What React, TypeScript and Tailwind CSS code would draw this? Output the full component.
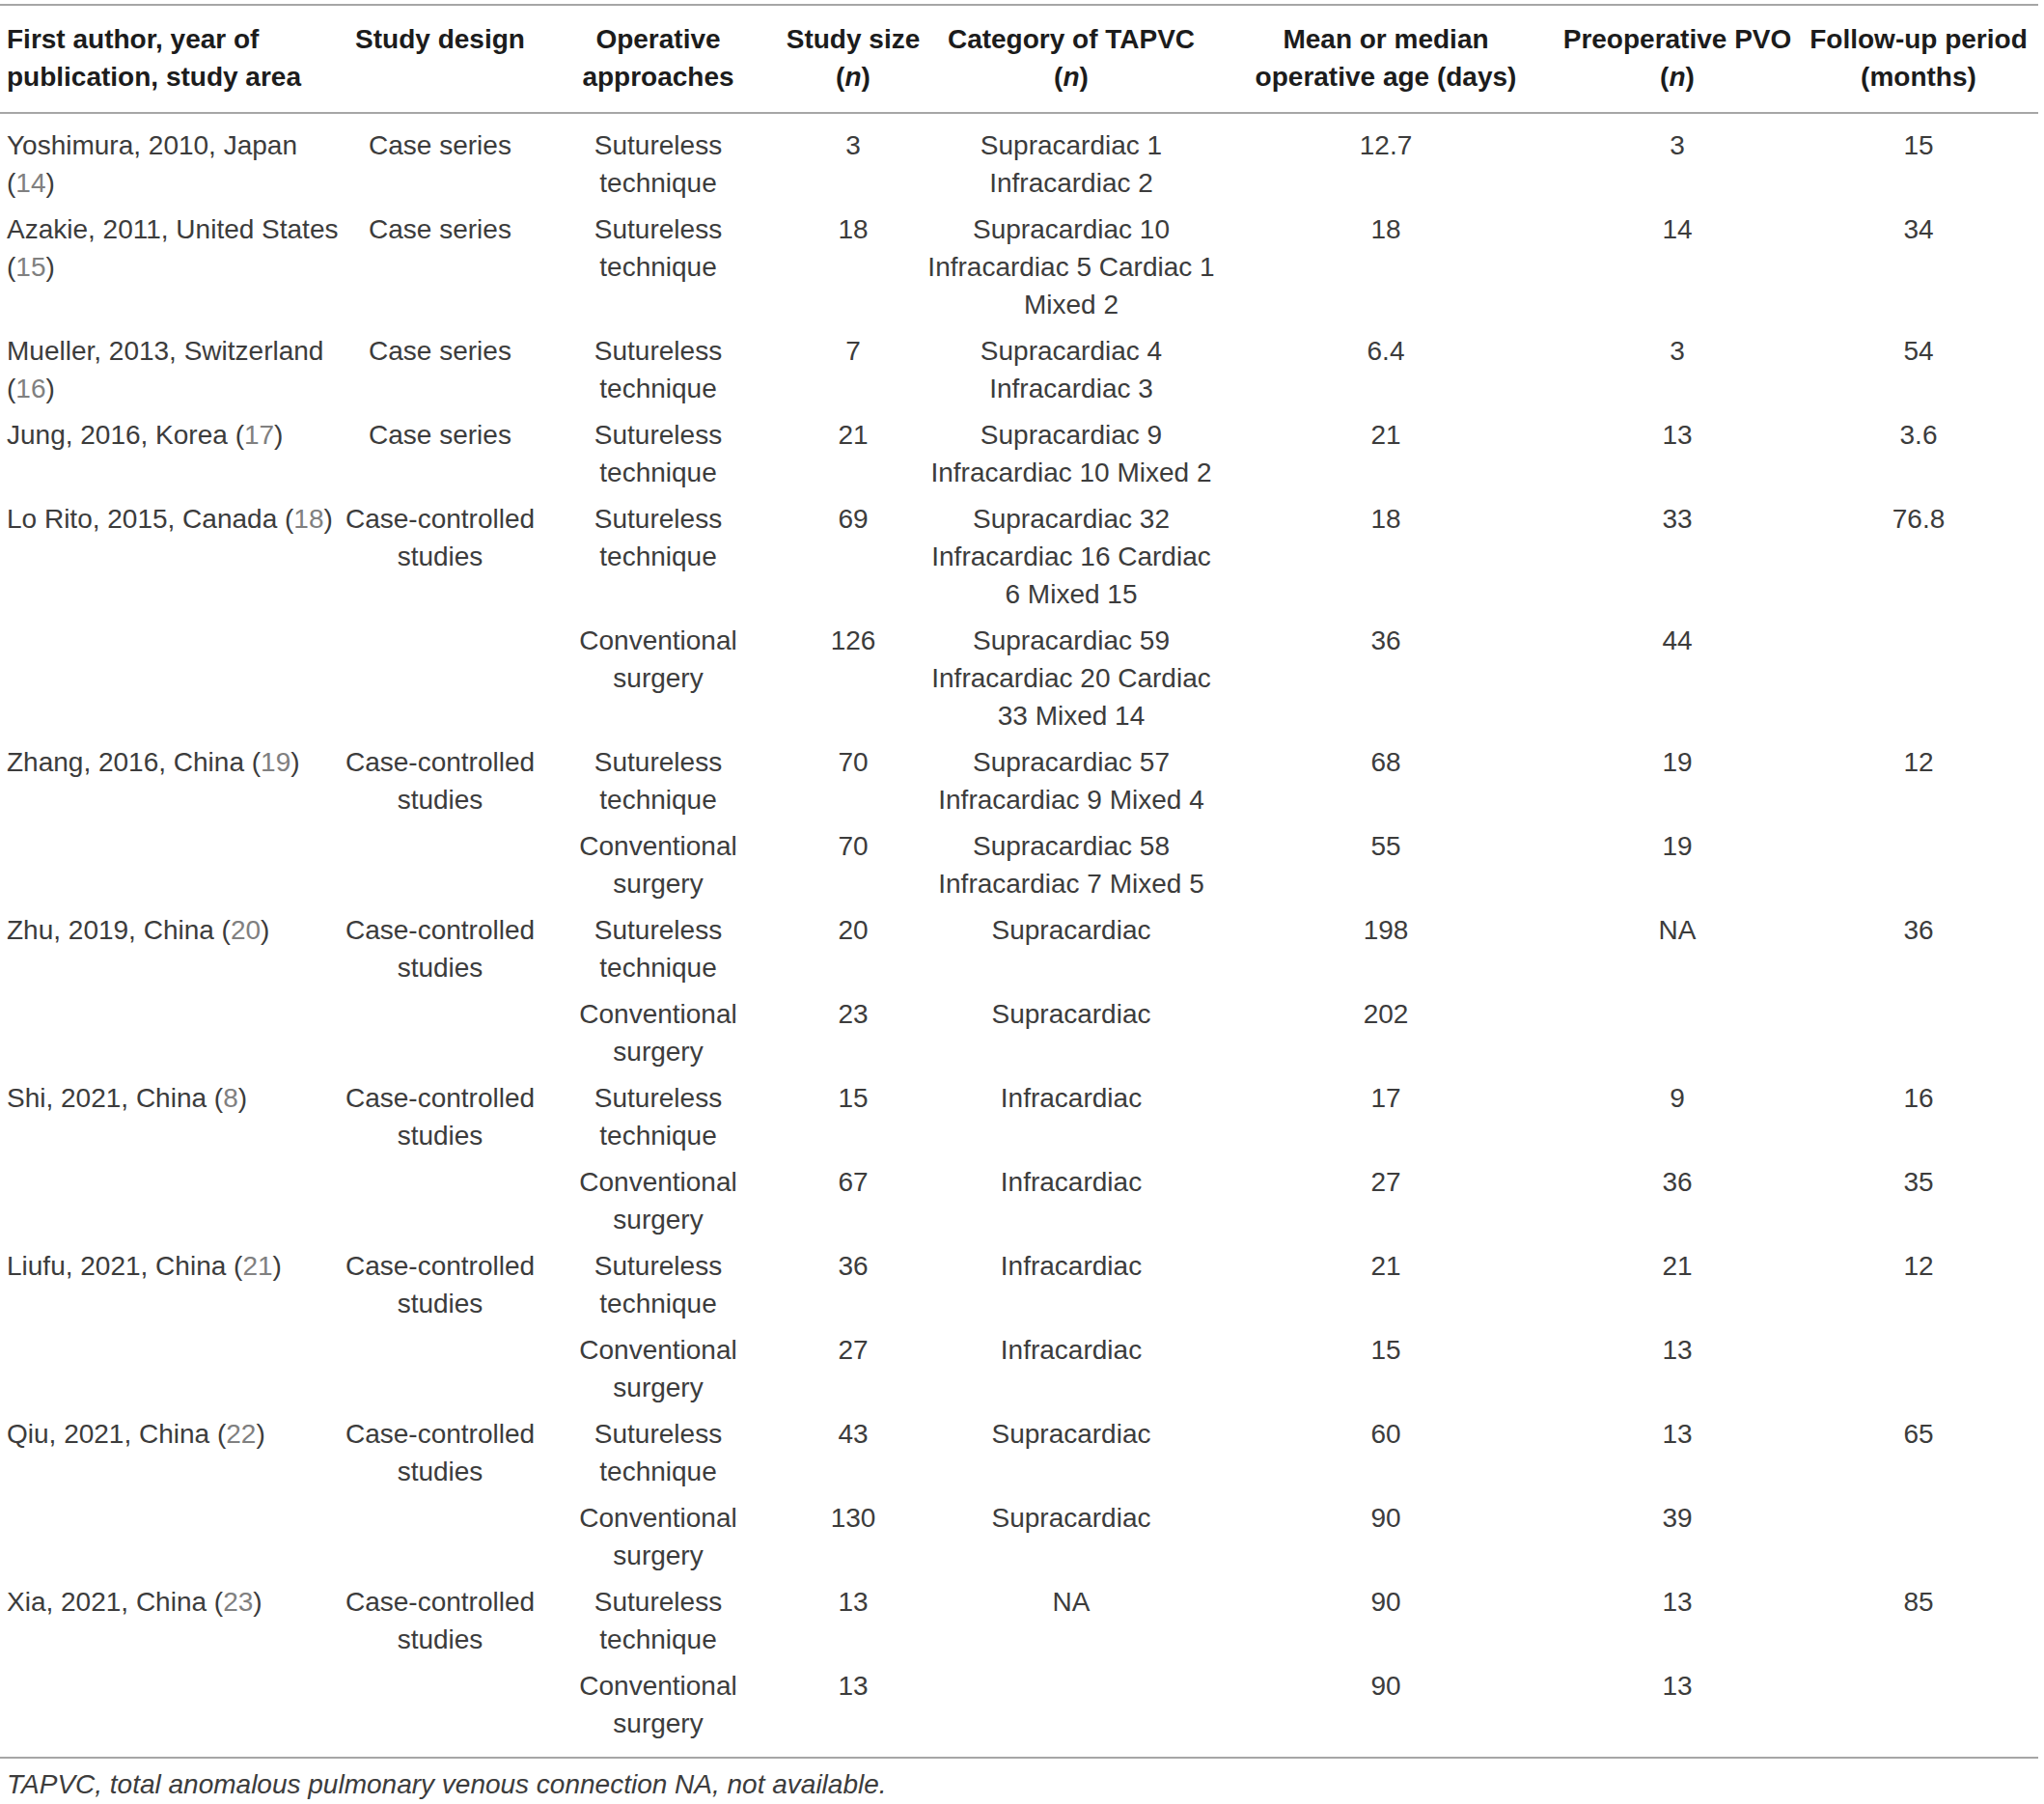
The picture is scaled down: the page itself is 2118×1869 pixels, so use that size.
import { type ReactNode } from 'react';

type Row = {
    author?: ReactNode[];
    design?: string[];
    approach: string[];
    size: string;
    category: string[];
    age: string;
    pvo: string;
    follow: string;
};

const cite = (n: string) => (
    <>
        (<span className="text-[#808080]">{n}</span>)
    </>
);

const sut = ['Sutureless', 'technique'];
const conv = ['Conventional', 'surgery'];
const cc = ['Case-controlled', 'studies'];
const cs = ['Case series'];

const rows: Row[] = [
    { author: ['Yoshimura, 2010, Japan', cite('14')], design: cs, approach: sut, size: '3', category: ['Supracardiac 1', 'Infracardiac 2'], age: '12.7', pvo: '3', follow: '15' },
    { author: ['Azakie, 2011, United States', cite('15')], design: cs, approach: sut, size: '18', category: ['Supracardiac 10', 'Infracardiac 5 Cardiac 1', 'Mixed 2'], age: '18', pvo: '14', follow: '34' },
    { author: ['Mueller, 2013, Switzerland', cite('16')], design: cs, approach: sut, size: '7', category: ['Supracardiac 4', 'Infracardiac 3'], age: '6.4', pvo: '3', follow: '54' },
    { author: [<>Jung, 2016, Korea {cite('17')}</>], design: cs, approach: sut, size: '21', category: ['Supracardiac 9', 'Infracardiac 10 Mixed 2'], age: '21', pvo: '13', follow: '3.6' },
    { author: [<>Lo Rito, 2015, Canada {cite('18')}</>], design: cc, approach: sut, size: '69', category: ['Supracardiac 32', 'Infracardiac 16 Cardiac', '6 Mixed 15'], age: '18', pvo: '33', follow: '76.8' },
    { approach: conv, size: '126', category: ['Supracardiac 59', 'Infracardiac 20 Cardiac', '33 Mixed 14'], age: '36', pvo: '44', follow: '' },
    { author: [<>Zhang, 2016, China {cite('19')}</>], design: cc, approach: sut, size: '70', category: ['Supracardiac 57', 'Infracardiac 9 Mixed 4'], age: '68', pvo: '19', follow: '12' },
    { approach: conv, size: '70', category: ['Supracardiac 58', 'Infracardiac 7 Mixed 5'], age: '55', pvo: '19', follow: '' },
    { author: [<>Zhu, 2019, China {cite('20')}</>], design: cc, approach: sut, size: '20', category: ['Supracardiac'], age: '198', pvo: 'NA', follow: '36' },
    { approach: conv, size: '23', category: ['Supracardiac'], age: '202', pvo: '', follow: '' },
    { author: [<>Shi, 2021, China {cite('8')}</>], design: cc, approach: sut, size: '15', category: ['Infracardiac'], age: '17', pvo: '9', follow: '16' },
    { approach: conv, size: '67', category: ['Infracardiac'], age: '27', pvo: '36', follow: '35' },
    { author: [<>Liufu, 2021, China {cite('21')}</>], design: cc, approach: sut, size: '36', category: ['Infracardiac'], age: '21', pvo: '21', follow: '12' },
    { approach: conv, size: '27', category: ['Infracardiac'], age: '15', pvo: '13', follow: '' },
    { author: [<>Qiu, 2021, China {cite('22')}</>], design: cc, approach: sut, size: '43', category: ['Supracardiac'], age: '60', pvo: '13', follow: '65' },
    { approach: conv, size: '130', category: ['Supracardiac'], age: '90', pvo: '39', follow: '' },
    { author: [<>Xia, 2021, China {cite('23')}</>], design: cc, approach: sut, size: '13', category: ['NA'], age: '90', pvo: '13', follow: '85' },
    { approach: conv, size: '13', category: [], age: '90', pvo: '13', follow: '' },
];

function Lines({ items }: { items?: ReactNode[] }) {
    if (!items) return null;
    return (
        <>
            {items.map((l, k) => (
                <div key={k}>{l}</div>
            ))}
        </>
    );
}

const italicN = <span className="italic">n</span>;

export default function App() {
    const last = rows.length - 1;
    return (
        <div className="bg-white min-h-screen pt-[4px] font-['Liberation_Sans',Arial,sans-serif] text-[28px] leading-[39px] text-[#3c3c3c]">
            <table className="w-[2112px] table-fixed border-collapse border-t-2 border-b-2 border-[#a6a6a6]">
                <colgroup>
                    <col className="w-[356px]" />
                    <col className="w-[200px]" />
                    <col className="w-[252px]" />
                    <col className="w-[152px]" />
                    <col className="w-[300px]" />
                    <col className="w-[352px]" />
                    <col className="w-[252px]" />
                    <col className="w-[248px]" />
                </colgroup>
                <thead>
                    <tr className="font-bold text-[#1c1c1c] align-top whitespace-nowrap">
                        <th className="text-left pl-[7px] pt-[15px] pb-[17px] border-b-2 border-[#a6a6a6] font-bold">
                            <div>First author, year of</div>
                            <div>publication, study area</div>
                        </th>
                        <th className="text-center pt-[15px] pb-[17px] border-b-2 border-[#a6a6a6] font-bold">Study design</th>
                        <th className="text-center pt-[15px] pb-[17px] border-b-2 border-[#a6a6a6] font-bold">
                            <div>Operative</div>
                            <div>approaches</div>
                        </th>
                        <th className="text-center pt-[15px] pb-[17px] border-b-2 border-[#a6a6a6] font-bold">
                            <div>Study size</div>
                            <div>({italicN})</div>
                        </th>
                        <th className="text-center pt-[15px] pb-[17px] border-b-2 border-[#a6a6a6] font-bold">
                            <div>Category of TAPVC</div>
                            <div>({italicN})</div>
                        </th>
                        <th className="text-center pt-[15px] pb-[17px] border-b-2 border-[#a6a6a6] font-bold">
                            <div>Mean or median</div>
                            <div>operative age (days)</div>
                        </th>
                        <th className="text-center pt-[15px] pb-[17px] border-b-2 border-[#a6a6a6] font-bold">
                            <div>Preoperative PVO</div>
                            <div>({italicN})</div>
                        </th>
                        <th className="text-center pt-[15px] pb-[17px] border-b-2 border-[#a6a6a6] font-bold">
                            <div>Follow-up period</div>
                            <div>(months)</div>
                        </th>
                    </tr>
                </thead>
                <tbody>
                    {rows.map((r, i) => {
                        const pad = `${i === 0 ? 'pt-[13px]' : 'pt-[5px]'} ${i === last ? 'pb-[15px]' : 'pb-[4px]'}`;
                        return (
                            <tr key={i} className="align-top whitespace-nowrap">
                                <td className={`text-left pl-[7px] ${pad}`}>
                                    <Lines items={r.author} />
                                </td>
                                <td className={`text-center ${pad}`}>
                                    <Lines items={r.design} />
                                </td>
                                <td className={`text-center ${pad}`}>
                                    <Lines items={r.approach} />
                                </td>
                                <td className={`text-center ${pad}`}>{r.size}</td>
                                <td className={`text-center ${pad}`}>
                                    <Lines items={r.category} />
                                </td>
                                <td className={`text-center ${pad}`}>{r.age}</td>
                                <td className={`text-center ${pad}`}>{r.pvo}</td>
                                <td className={`text-center ${pad}`}>{r.follow}</td>
                            </tr>
                        );
                    })}
                </tbody>
            </table>
            <p className="mt-[7px] pl-[7px] italic">TAPVC, total anomalous pulmonary venous connection NA, not available.</p>
        </div>
    );
}
